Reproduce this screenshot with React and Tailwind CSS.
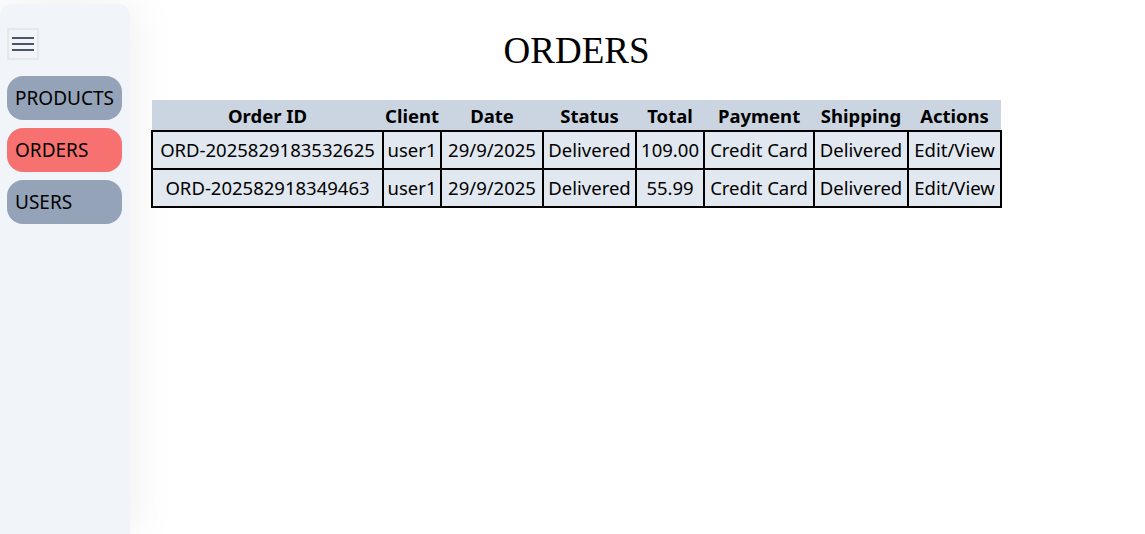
import React from 'react';

const orders = [
  { id: 'ORD-2025829183532625', client: 'user1', date: '29/9/2025', status: 'Delivered', total: '109.00', payment: 'Credit Card', shipping: 'Delivered' },
  { id: 'ORD-202582918349463', client: 'user1', date: '29/9/2025', status: 'Delivered', total: '55.99', payment: 'Credit Card', shipping: 'Delivered' },
];

const headers = ['Order ID', 'Client', 'Date', 'Status', 'Total', 'Payment', 'Shipping', 'Actions'];
const widths = ['w-[231px]', 'w-[58px]', 'w-[102px]', 'w-[93px]', 'w-[68px]', 'w-[110px]', 'w-[94px]', 'w-[93px]'];

function Sidebar() {
  const items = [
    { name: 'PRODUCTS', active: false },
    { name: 'ORDERS', active: true },
    { name: 'USERS', active: false },
  ];
  return (
    <aside className="mt-1 h-[530px] w-[130px] shrink-0 rounded-t-xl bg-[#f1f4f9] shadow-[0_0_50px_rgba(0,0,0,0.08)] pl-[7px] pr-[8px] pt-6">
      <button className="flex h-8 w-8 flex-col items-center justify-center gap-[4px] border-2 border-[#e6e8ec]">
        <span className="block h-[2px] w-[22px] bg-[#4b5566]" />
        <span className="block h-[2px] w-[22px] bg-[#4b5566]" />
        <span className="block h-[2px] w-[22px] bg-[#4b5566]" />
      </button>
      <nav className="mt-4 flex flex-col gap-2">
        {items.map((item) => (
          <div
            key={item.name}
            className={`flex h-11 items-center rounded-2xl px-2 text-[19px] text-black ${item.active ? 'bg-[#f87171]' : 'bg-[#94a3b8]'}`}
          >
            {item.name}
          </div>
        ))}
      </nav>
    </aside>
  );
}

export default function App() {
  return (
    <div className="flex h-[534px] bg-white font-['Noto_Sans',sans-serif] overflow-hidden">
      <Sidebar />
      <main className="pl-[21px]">
        <div className="w-fit">
          <h1 className="mt-[28px] mb-[26px] text-center font-['Liberation_Serif',serif] text-[37px] leading-[46px]">ORDERS</h1>
          <table className="border-collapse text-[18.5px] text-black">
            <thead>
              <tr className="bg-[#cbd5e1]">
                {headers.map((h, i) => (
                  <th key={h} className={`${widths[i]} px-[2px] pt-[1px] pb-0 h-[31px] font-bold`}>{h}</th>
                ))}
              </tr>
            </thead>
            <tbody>
              {orders.map((o) => (
                <tr key={o.id} className="bg-[#e2e8f0]">
                  {[o.id, o.client, o.date, o.status, o.total, o.payment, o.shipping, 'Edit/View'].map((v, i) => (
                    <td key={i} className="h-[38px] border-2 border-black px-[2px] py-0 text-center whitespace-nowrap">{v}</td>
                  ))}
                </tr>
              ))}
            </tbody>
          </table>
        </div>
      </main>
    </div>
  );
}
